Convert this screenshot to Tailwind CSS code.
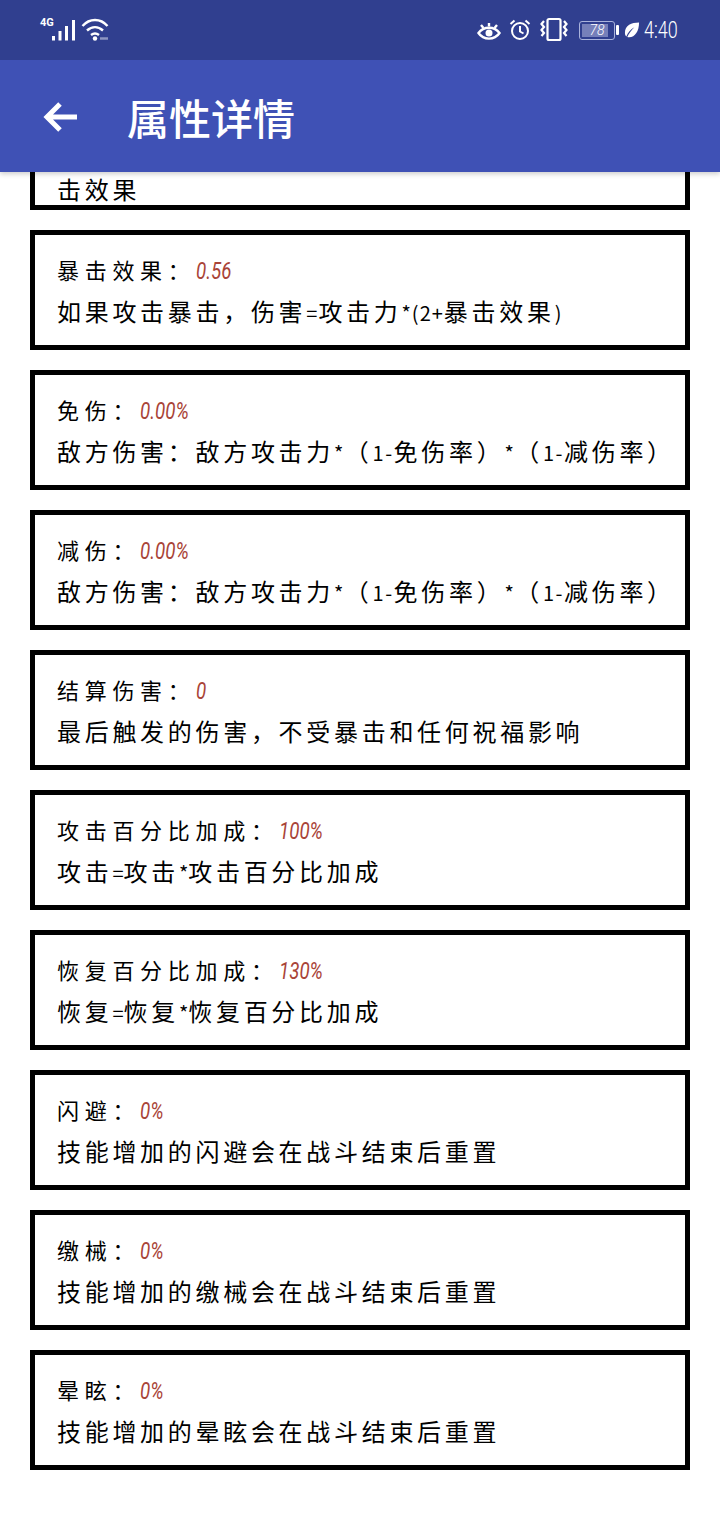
<!DOCTYPE html>
<html lang="zh-CN">
<head>
  <meta charset="UTF-8" />
  <title>属性详情</title>
  <script src="https://cdn.jsdelivr.net/npm/@tailwindcss/browser@4"></script>
</head>
<body class="bg-white w-[720px] h-[1520px] overflow-hidden font-['Noto_Sans_CJK_SC','Noto_Sans',sans-serif]">

  <!-- Status bar -->
  <div class="relative z-20 h-[60px] bg-[#303f8f] flex items-center justify-between pl-[40px] pr-[40px] text-white">
    <div class="flex items-start">
      <span class="w-[12px] text-[11px] leading-[11px] font-bold font-['Roboto'] -mt-[1px] whitespace-nowrap">4G</span>
      <svg class="w-[24px] h-[24px]" viewBox="0 0 24 24" fill="#fff">
        <rect x="0" y="18" width="3" height="4.500" />
        <rect x="6.500" y="13" width="3" height="9.500" />
        <rect x="13" y="8" width="3" height="14.500" />
        <rect x="20" y="2" width="3" height="20.500" />
      </svg>
      <svg class="w-[30px] h-[24px] ml-[5px]" viewBox="0 0 30 24" fill="none" stroke="#fff" stroke-width="2.400">
        <path d="M1.500 8c7-8 18-8 25 0" />
        <path d="M6 12.500c5-4.500 11-4.500 16 0" />
        <path d="M10 17c2.500-2 5.500-2 8 0" />
        <circle cx="14" cy="20.500" r="2.200" fill="#fff" stroke="none" />
        <path d="M19 20.500h8" stroke="#fff" stroke-opacity="0.45" stroke-width="2.500" />
      </svg>
    </div>
    <div class="flex items-center">
      <!-- eye -->
      <svg class="w-[24px] h-[24px]" viewBox="0 0 24 24" fill="none" stroke="#fff" stroke-width="2.400">
        <path d="M1.500 15c5-7 16-7 21 0c-5 7.500-16 7.500-21 0z" />
        <circle cx="12" cy="15" r="3.500" fill="#fff" stroke="none" />
        <path d="M4 7l2.500 3M12 5v3.500M20 7l-2.500 3" />
      </svg>
      <!-- alarm -->
      <svg class="w-[24px] h-[24px] ml-[7px]" viewBox="0 0 24 24" fill="none" stroke="#fff" stroke-width="2">
        <circle cx="12" cy="13" r="8" />
        <path d="M12 8v5.500l3.500 2M2.500 6l4-3.500M21.500 6l-4-3.500" />
      </svg>
      <!-- vibrate -->
      <svg class="w-[30px] h-[26px] ml-[7px]" viewBox="0 0 30 26" fill="none" stroke="#fff" stroke-width="2.200">
        <rect x="8.500" y="2" width="13" height="21" rx="1.500" />
        <path d="M5 4l-2.500 3l2.500 3l-2.500 3l2.500 3l-2.500 3M25 4l2.500 3l-2.500 3l2.500 3l-2.500 3l2.500 3" />
      </svg>
      <!-- battery -->
      <div class="relative ml-[10px] w-[36px] h-[19px] rounded-[3px] border-[1.5px] border-[#aab3dc] flex items-center p-[2px]">
        <div class="h-full w-[26px] bg-[#7680ba]"></div>
        <span class="absolute inset-0 text-center text-[14px] leading-[16px] italic font-['Roboto'] font-light">78</span>
      </div>
      <div class="w-[3px] h-[10px] bg-white ml-[1px] mr-[5px] rounded-[1px]"></div>
      <!-- leaf -->
      <svg class="w-[16px] h-[18px]" viewBox="0 0 17 18" fill="#fff">
        <path d="M16 1C8 1 1 4 1 12c0 2 .5 3 1.500 4C4 12 7 8 11 6C8 9 5 13 3.500 16.500C11 18 16 11 16 1z" />
      </svg>
      <span class="ml-[4px] w-[36px] text-[23px] leading-none font-['Roboto'] font-light inline-block origin-left scale-x-[.78]">4:40</span>
    </div>
  </div>

  <!-- Toolbar -->
  <header class="relative z-10 h-[112px] bg-[#3f51b5] flex items-center shadow-[0_2px_5px_rgba(0,0,0,0.2)] text-white">
    <svg class="w-[48px] h-[48px] ml-[36px] mt-[2px]" viewBox="0 0 48 48" fill="none" stroke="#fff" stroke-width="5">
      <path d="M41 24H10M24 11L11 24l13 13" />
    </svg>
    <h1 class="ml-[43px] text-[42px] leading-none font-medium mt-[2px]">属性详情</h1>
  </header>

  <!-- List -->
  <main class="-mt-[82px] px-[30px] flex flex-col gap-[20px]">
    <div class="h-[120px] border-[5px] border-black pl-[22px] pt-[74px]">
      <p class="text-[24px] leading-[40px] tracking-[3.700px] text-black">击效果</p>
    </div>

    <div class="h-[120px] border-[5px] border-black pl-[22px] pt-[14px]">
      <p class="text-[22px] leading-[40px] tracking-[5.700px] text-black whitespace-nowrap">暴击效果&#65306;<span class="inline-block origin-left scale-x-[.78] text-[24px] font-normal tracking-normal italic font-['Roboto'] text-[#a94438]">0.56</span></p>
      <p class="text-[24px] leading-[39px] tracking-[3.700px] text-black whitespace-nowrap">如果攻击暴击&#65292;伤害<span class="tracking-[1px] text-[20px]">=</span>攻击力<span class="tracking-[1px] text-[20px]">*(2+</span>暴击效果<span class="tracking-[1px] text-[20px]">)</span></p>
    </div>

    <div class="h-[120px] border-[5px] border-black pl-[22px] pt-[14px]">
      <p class="text-[22px] leading-[40px] tracking-[5.700px] text-black whitespace-nowrap">免伤&#65306;<span class="inline-block origin-left scale-x-[.78] text-[24px] font-normal tracking-normal italic font-['Roboto'] text-[#a94438]">0.00%</span></p>
      <p class="text-[24px] leading-[39px] tracking-[3.700px] text-black whitespace-nowrap">敌方伤害&#65306;敌方攻击力<span class="tracking-[1.500px] text-[20px]">*</span>&#65288;<span class="tracking-[1.500px] text-[20px]">1-</span>免伤率&#65289;<span class="tracking-[1.500px] text-[20px]">*</span>&#65288;<span class="tracking-[1.500px] text-[20px]">1-</span>减伤率&#65289;</p>
    </div>

    <div class="h-[120px] border-[5px] border-black pl-[22px] pt-[14px]">
      <p class="text-[22px] leading-[40px] tracking-[5.700px] text-black whitespace-nowrap">减伤&#65306;<span class="inline-block origin-left scale-x-[.78] text-[24px] font-normal tracking-normal italic font-['Roboto'] text-[#a94438]">0.00%</span></p>
      <p class="text-[24px] leading-[39px] tracking-[3.700px] text-black whitespace-nowrap">敌方伤害&#65306;敌方攻击力<span class="tracking-[1.500px] text-[20px]">*</span>&#65288;<span class="tracking-[1.500px] text-[20px]">1-</span>免伤率&#65289;<span class="tracking-[1.500px] text-[20px]">*</span>&#65288;<span class="tracking-[1.500px] text-[20px]">1-</span>减伤率&#65289;</p>
    </div>

    <div class="h-[120px] border-[5px] border-black pl-[22px] pt-[14px]">
      <p class="text-[22px] leading-[40px] tracking-[5.700px] text-black whitespace-nowrap">结算伤害&#65306;<span class="inline-block origin-left scale-x-[.78] text-[24px] font-normal tracking-normal italic font-['Roboto'] text-[#a94438]">0</span></p>
      <p class="text-[24px] leading-[39px] tracking-[3.700px] text-black whitespace-nowrap">最后触发的伤害&#65292;不受暴击和任何祝福影响</p>
    </div>

    <div class="h-[120px] border-[5px] border-black pl-[22px] pt-[14px]">
      <p class="text-[22px] leading-[40px] tracking-[5.700px] text-black whitespace-nowrap">攻击百分比加成&#65306;<span class="inline-block origin-left scale-x-[.78] text-[24px] font-normal tracking-normal italic font-['Roboto'] text-[#a94438]">100%</span></p>
      <p class="text-[24px] leading-[39px] tracking-[3.700px] text-black">攻击<span class="tracking-normal text-[20px]">=</span>攻击<span class="tracking-normal text-[20px]">*</span>攻击百分比加成</p>
    </div>

    <div class="h-[120px] border-[5px] border-black pl-[22px] pt-[14px]">
      <p class="text-[22px] leading-[40px] tracking-[5.700px] text-black whitespace-nowrap">恢复百分比加成&#65306;<span class="inline-block origin-left scale-x-[.78] text-[24px] font-normal tracking-normal italic font-['Roboto'] text-[#a94438]">130%</span></p>
      <p class="text-[24px] leading-[39px] tracking-[3.700px] text-black">恢复<span class="tracking-normal text-[20px]">=</span>恢复<span class="tracking-normal text-[20px]">*</span>恢复百分比加成</p>
    </div>

    <div class="h-[120px] border-[5px] border-black pl-[22px] pt-[14px]">
      <p class="text-[22px] leading-[40px] tracking-[5.700px] text-black whitespace-nowrap">闪避&#65306;<span class="inline-block origin-left scale-x-[.78] text-[24px] font-normal tracking-normal italic font-['Roboto'] text-[#a94438]">0%</span></p>
      <p class="text-[24px] leading-[39px] tracking-[3.700px] text-black">技能增加的闪避会在战斗结束后重置</p>
    </div>

    <div class="h-[120px] border-[5px] border-black pl-[22px] pt-[14px]">
      <p class="text-[22px] leading-[40px] tracking-[5.700px] text-black whitespace-nowrap">缴械&#65306;<span class="inline-block origin-left scale-x-[.78] text-[24px] font-normal tracking-normal italic font-['Roboto'] text-[#a94438]">0%</span></p>
      <p class="text-[24px] leading-[39px] tracking-[3.700px] text-black">技能增加的缴械会在战斗结束后重置</p>
    </div>

    <div class="h-[120px] border-[5px] border-black pl-[22px] pt-[14px]">
      <p class="text-[22px] leading-[40px] tracking-[5.700px] text-black whitespace-nowrap">晕眩&#65306;<span class="inline-block origin-left scale-x-[.78] text-[24px] font-normal tracking-normal italic font-['Roboto'] text-[#a94438]">0%</span></p>
      <p class="text-[24px] leading-[39px] tracking-[3.700px] text-black">技能增加的晕眩会在战斗结束后重置</p>
    </div>
  </main>

</body>
</html>
